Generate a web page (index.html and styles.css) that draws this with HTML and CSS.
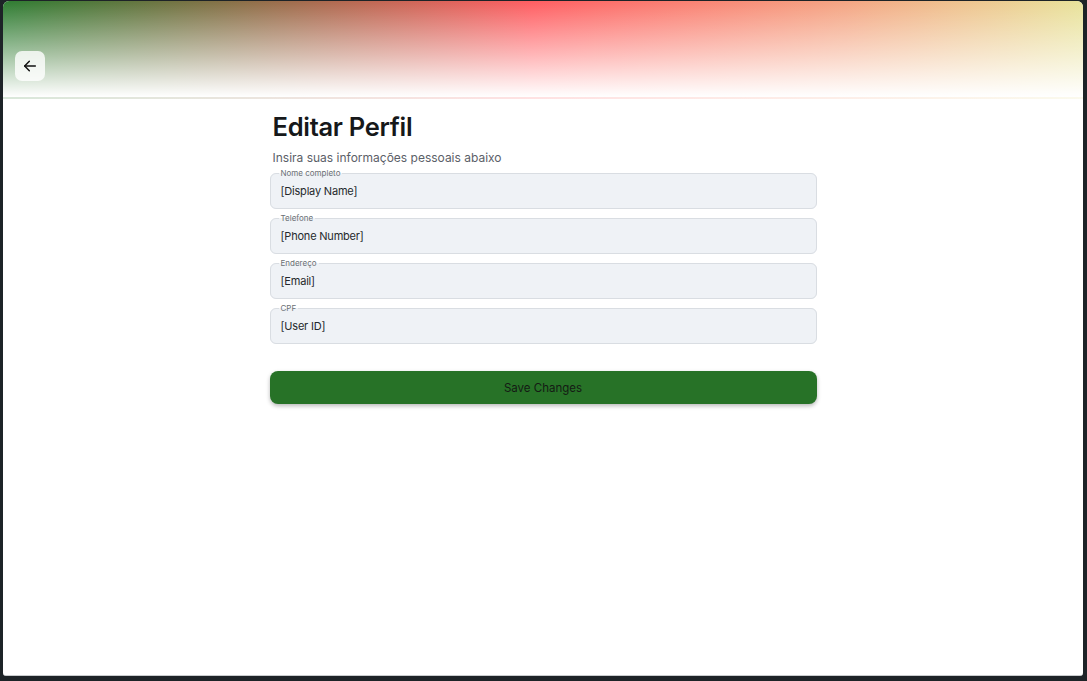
FILE: index.html
```html
<!DOCTYPE html>
<html lang="pt-BR">
<head>
<meta charset="utf-8">
<title>Editar Perfil</title>
<link rel="stylesheet" href="styles.css">
</head>
<body>
<div class="window">
  <header class="hero">
    <button class="back" aria-label="Voltar">
      <svg width="16" height="16" viewBox="0 0 24 24" fill="none" stroke="#111" stroke-width="2.2" stroke-linecap="round" stroke-linejoin="round"><path d="M20 12H4"/><path d="M11 5l-7 7 7 7"/></svg>
    </button>
  </header>
  <main class="content">
    <h1 class="title">Editar Perfil</h1>
    <p class="subtitle">Insira suas informações pessoais abaixo</p>
    <form class="form">
      <fieldset class="field"><legend class="field-label">Nome completo</legend><div class="field-value">[Display Name]</div></fieldset>
      <fieldset class="field"><legend class="field-label">Telefone</legend><div class="field-value">[Phone Number]</div></fieldset>
      <fieldset class="field"><legend class="field-label">Endereço</legend><div class="field-value">[Email]</div></fieldset>
      <fieldset class="field"><legend class="field-label">CPF</legend><div class="field-value">[User ID]</div></fieldset>
      <button type="button" class="save">Save Changes</button>
    </form>
  </main>
</div>
</body>
</html>
```
FILE: styles.css
```css
html, body {
  margin: 0;
  padding: 0;
  background: #1d2327;
  height: 100%;
}
body {
  font-family: Inter, "Noto Sans", sans-serif;
  overflow: hidden;
}
.window {
  margin: 1px 4px 0 3px;
  height: 675px;
  background: #ffffff;
  border-radius: 6px 6px 3px 3px;
  overflow: hidden;
  border-bottom: 1px solid #c9ccce;
  box-sizing: border-box;
}
.hero {
  height: 98px;
  box-sizing: border-box;
  padding: 50px 0 0 12px;
  background:
    linear-gradient(to bottom, rgba(255,255,255,0) 0%, rgba(255,255,255,0.55) 55%, rgba(255,255,255,1) 98%, rgba(255,255,255,0.82) 98%),
    linear-gradient(to right, #2e7d32 0%, #ff5e62 49%, #f4a583 78%, #e8e29a 100%);
}
.back {
  width: 30px;
  height: 30px;
  border: none;
  border-radius: 7px;
  background: rgba(255,255,255,0.8);
  display: flex;
  align-items: center;
  justify-content: center;
  padding: 0;
}
.content {
  width: 547px;
  margin: 0 auto;
  padding-top: 12px;
}
.title {
  margin: 0 0 0 3px;
  font-size: 25.5px;
  line-height: 32px;
  font-weight: 600;
  color: #16181a;
  letter-spacing: -0.3px;
}
.subtitle {
  margin: 7px 0 0 3px;
  font-size: 12px;
  line-height: 16px;
  color: #5b6068;
}
.form {
  margin-top: 2px;
  display: flex;
  flex-direction: column;
  gap: 4px;
}
.field {
  margin: 0;
  padding: 0 10px;
  border: 1px solid #d9dde2;
  border-radius: 6px;
  background: #eff2f6;
  min-width: 0;
}
.field-label {
  font-size: 8px;
  line-height: 10px;
  color: #6a6f74;
  padding: 0 2px;
  margin-left: -2px;
}
.field-value {
  height: 30px;
  box-sizing: border-box;
  padding-bottom: 4px;
  display: flex;
  align-items: center;
  font-size: 11px;
  letter-spacing: -0.2px;
  color: #25292c;
}
.save {
  margin-top: 23px;
  height: 33px;
  border: none;
  border-radius: 8px;
  background: #277227;
  color: #141a14;
  font-family: Inter, "Noto Sans", sans-serif;
  font-size: 11.5px;
  box-shadow: 0 2px 4px rgba(0,0,0,0.28);
}
```
